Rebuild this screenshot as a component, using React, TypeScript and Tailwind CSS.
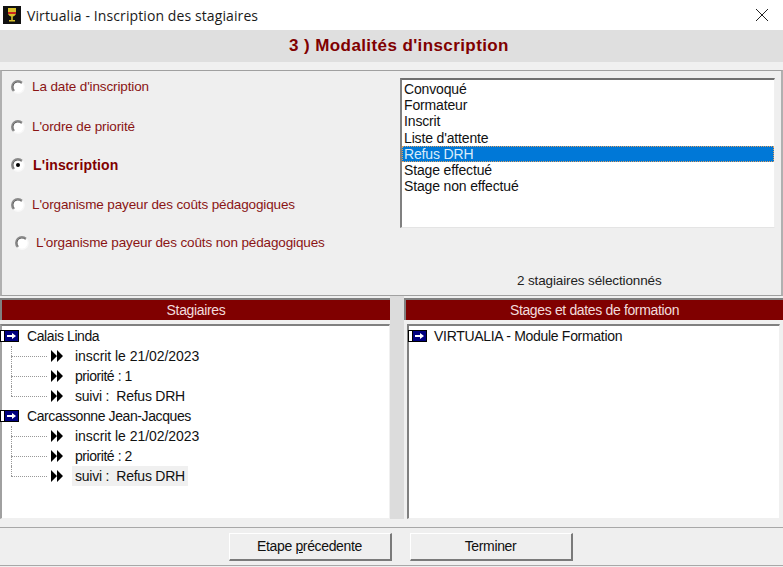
import React from "react";

const statuses = ["Convoqué", "Formateur", "Inscrit", "Liste d'attente", "Refus DRH", "Stage effectué", "Stage non effectué"];

const sans = "font-['Liberation_Sans',Arial,sans-serif]";

function Radio({ checked }: { checked?: boolean }) {
  return (
    <svg width="14" height="14" viewBox="0 0 14 14" className="shrink-0">
      <circle cx="7" cy="7" r="6" fill="#fff" />
      <path d="M2.6 11.2A6 6 0 0 1 11.2 2.6" fill="none" stroke="#8a8a8a" strokeWidth="1.6" />
      <path d="M3.4 10.4A4.8 4.8 0 0 1 10.4 3.4" fill="none" stroke="#505050" strokeWidth="1" />
      <path d="M11.4 2.8A6 6 0 0 1 2.8 11.4" fill="none" stroke="#f8f8f8" strokeWidth="1.4" />
      {checked && <circle cx="7" cy="7" r="2" fill="#000" />}
    </svg>
  );
}

function RadioRow({ label, checked, className }: { label: string; checked?: boolean; className: string }) {
  return (
    <div className={`flex items-center ${className}`}>
      <Radio checked={checked} />
      <span className={checked ? "ml-2 text-[14px] font-bold tracking-[0.15px] text-[#800000]" : "ml-[7px] text-[13.5px] tracking-[-0.13px] text-[#8a1414]"}>
        {label}
      </span>
    </div>
  );
}

function ArrowBox() {
  return (
    <svg width="19" height="12" viewBox="0 0 19 12" className="shrink-0">
      <rect x="0" y="0" width="19" height="12" fill="#000" />
      <rect x="1" y="1" width="3" height="10" fill="#fff" />
      <rect x="5" y="1" width="13" height="10" fill="#000080" />
      <path d="M7 5h5V3l4 3-4 3V7H7z" fill="#fff" />
    </svg>
  );
}

function DoubleArrow() {
  return (
    <svg width="12" height="12" viewBox="0 0 12 12" className="shrink-0">
      <path d="M0 0l6 6-6 6zM6 0l6 6-6 6z" fill="#000" />
    </svg>
  );
}

function Branch({ text, last, hot, track }: { text: string; last?: boolean; hot?: boolean; track: string }) {
  return (
    <div className="relative flex h-5 items-center pl-[49px]">
      <span className={`absolute left-[9px] top-0 w-0 border-l border-dotted border-[#999] ${last ? "h-2.5" : "h-5"}`} />
      <span className="absolute left-[9px] top-2.5 h-0 w-[36px] border-t border-dotted border-[#999]" />
      <DoubleArrow />
      <span className={`ml-[9px] flex h-5 items-center whitespace-pre px-[3px] text-[14px] text-[#111] ${track} ${hot ? "bg-[#f0f0f0]" : ""}`}>
        {text}
      </span>
    </div>
  );
}

function Person({ name, rank, hot }: { name: string; rank: number; hot?: boolean }) {
  return (
    <div>
      <div className="-ml-0.5 flex h-5 items-center">
        <ArrowBox />
        <span className="ml-2 text-[14px] tracking-[-0.4px] text-[#111]">{name}</span>
      </div>
      <Branch text="inscrit le 21/02/2023" track="tracking-[-0.05px]" />
      <Branch text={`priorité : ${rank}`} track="tracking-[-0.45px]" />
      <Branch text="suivi :  Refus DRH" last hot={hot} track="tracking-[-0.25px]" />
    </div>
  );
}

function ColumnHead({ title }: { title: string }) {
  return (
    <div className="flex h-[22px] items-center justify-center border-t-2 border-l-2 border-[#808080] bg-[#800000] text-[14px] tracking-[-0.35px] text-[#f2dcdc]">
      {title}
    </div>
  );
}

function Button({ children, className }: { children: React.ReactNode; className: string }) {
  return (
    <div className={`flex h-[28px] items-center justify-center border-t border-l border-[#fff] border-r-2 border-b-2 border-r-[#7a7a7a] border-b-[#7a7a7a] bg-[#efefef] text-[14px] tracking-[-0.35px] text-[#111] ${className}`}>
      {children}
    </div>
  );
}

export default function App() {
  return (
    <div className={`flex h-[567px] w-[783px] flex-col overflow-hidden bg-[#f0f0f0] ${sans}`}>
      {/* title bar */}
      <div className="flex h-[30px] shrink-0 items-center bg-white pl-[3px]">
        <svg width="18" height="18" viewBox="0 0 18 18" className="shrink-0">
          <rect width="18" height="18" fill="#111" />
          <path d="M5 2h8v5c0 2-2 3.500-3.200 3.600V14H12v1.500H6V14h2.200v-3.400C7 10.500 5 9 5 7z" fill="#d9c22c" />
          <rect x="5" y="6" width="8" height="2" fill="#c8261e" />
        </svg>
        <span className="ml-1.5 font-['Open_Sans',sans-serif] text-[14px] tracking-[0.1px] text-[#1a1a1a]">Virtualia - Inscription des stagiaires</span>
        <svg width="14" height="14" viewBox="0 0 14 14" className="ml-auto mr-[14px]">
          <path d="M1 1l12 12M13 1L1 13" stroke="#222" strokeWidth="1" fill="none" />
        </svg>
      </div>

      {/* step title */}
      <div className="flex h-8 shrink-0 items-center justify-center bg-[#dfdfdf] pl-[15px] text-[17px] font-bold tracking-[0.4px] text-[#800000]">
        3 ) Modalités d'inscription
      </div>
      <div className="h-2 shrink-0 bg-[#f0f0f0]" />

      {/* options */}
      <div className="flex h-[226px] shrink-0 border-y border-l-2 border-r-2 border-y-[#a0a0a0] border-l-[#b0b0b0] border-r-[#b0b0b0] bg-[#efefef]">
        <div className="w-[398px] shrink-0 pt-1.5 pl-[9px]">
          <RadioRow label="La date d'inscription" className="h-5" />
          <RadioRow label="L'ordre de priorité" className="mt-5 h-5" />
          <RadioRow label="L'inscription" checked className="mt-[18px] h-5" />
          <RadioRow label="L'organisme payeur des coûts pédagogiques" className="mt-5 h-5" />
          <RadioRow label="L'organisme payeur des coûts non pédagogiques" className="mt-[18px] ml-1 h-5" />
        </div>
        <div className="flex flex-1 flex-col">
          <div className="mt-[7px] h-[150px] w-[375px] border-t-2 border-l-2 border-r border-b border-t-[#707070] border-l-[#808080] border-r-[#f0f0f0] border-b-[#e4e4e4] bg-white pt-px text-[14px] leading-[16.2px] tracking-[-0.15px] text-[#111]">
            {statuses.map((s) =>
              s === "Refus DRH" ? (
                <div key={s} className="border border-dotted border-[#e0a060] bg-[#0078d7] pl-px leading-[14.2px] text-[#d8ecfb]">
                  {s}
                </div>
              ) : (
                <div key={s} className="pl-0.5">{s}</div>
              ),
            )}
          </div>
          <div className="mt-[43px] ml-[117px] text-[13.5px] tracking-[-0.13px] text-[#222]">2 stagiaires sélectionnés</div>
        </div>
      </div>

      {/* lists */}
      <div className="flex h-[223px] shrink-0">
        <div className="flex w-[390px] shrink-0 flex-col pt-0.5">
          <ColumnHead title="Stagiaires" />
          <div className="mt-1 flex-1 border-t-2 border-l-2 border-r border-b border-t-[#808080] border-l-[#a0a0a0] border-r-[#f0f0f0] border-b-[#f0f0f0] bg-white">
            <Person name="Calais Linda" rank={1} />
            <Person name="Carcassonne Jean-Jacques" rank={2} hot />
          </div>
        </div>
        <div className="w-3.5 shrink-0 bg-[#dcdcdc]" />
        <div className="flex flex-1 flex-col pt-0.5">
          <ColumnHead title="Stages et dates de formation" />
          <div className="mx-[3px] mt-1 flex-1 border-t-2 border-l-2 border-r border-b border-t-[#808080] border-l-[#808080] border-r-[#f0f0f0] border-b-[#f0f0f0] bg-white">
            <div className="-ml-px flex h-5 items-center">
              <ArrowBox />
              <span className="ml-[7px] text-[14px] tracking-[-0.3px] text-[#111]">VIRTUALIA - Module Formation</span>
            </div>
          </div>
        </div>
      </div>

      {/* footer */}
      <div className="mt-2 flex h-[39px] shrink-0 items-center justify-center gap-[18px] border-y border-[#a8a8a8] bg-[#efefef] pt-px pl-[18px]">
        <Button className="w-[163px]">
          <span>Etape <span className="underline">p</span>récedente</span>
        </Button>
        <Button className="w-[163px]">Terminer</Button>
      </div>
    </div>
  );
}
